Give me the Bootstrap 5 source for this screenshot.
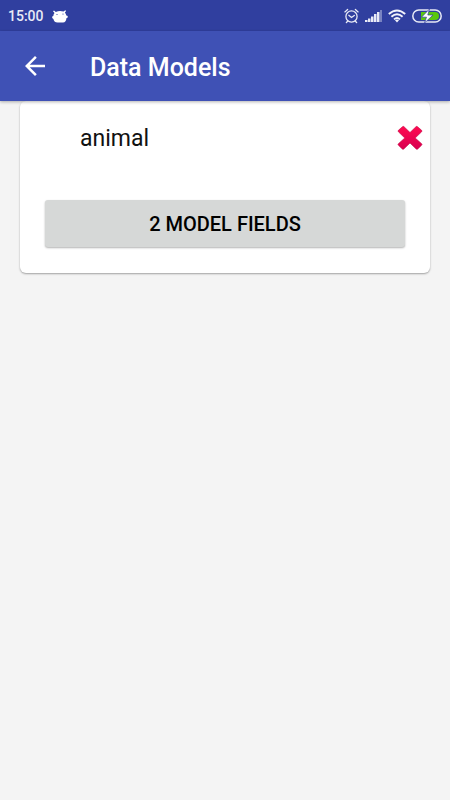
<!DOCTYPE html>
<html lang="en">
<head>
<meta charset="utf-8">
<meta name="viewport" content="width=device-width, initial-scale=1">
<title>Data Models</title>
<link href="https://cdn.jsdelivr.net/npm/bootstrap@5.3.0/dist/css/bootstrap.min.css" rel="stylesheet">
<style>
body { background: #f4f4f4; font-family: Roboto, "Liberation Sans", sans-serif; color: #111; }
svg { display: block; flex: none; }
.status-bar { background: #303f9f; height: 31px; padding: 1px 8px 0; color: #e8eaf6; font-size: 14px; font-weight: 500; }
.status-icons { gap: 6px; }
.app-bar { background: #3f51b5; height: 70px; padding: 0 20px; box-shadow: 0 1px 3px rgba(0,0,0,.3); position: relative; z-index: 1; }
.app-title { color: #fff; font-size: 25px; line-height: 32px; font-weight: 500; margin-left: 40px; padding-top: 3px; }
.model-card { border-radius: 6px; box-shadow: 0 1px 2px rgba(0,0,0,.35); padding-bottom: 26px; }
.model-head { padding: 19px 7px 0 60px; }
.model-name { font-size: 23px; line-height: 34px; font-weight: 400; padding-top: 2px; }
.fields-btn, .fields-btn:hover { background: #d6d8d7; color: #000; font-size: 20px; line-height: 26px; font-weight: 500; border: 0; border-radius: 3px; padding: 11px 10px 10px; box-shadow: 0 1px 2px rgba(0,0,0,.3); }
.fields-row { padding: 44px 25px 0; }
</style>
<script src="https://cdn.jsdelivr.net/npm/bootstrap@5.3.0/dist/js/bootstrap.bundle.min.js"></script>
</head>
<body class="min-vh-100">
<div class="status-bar d-flex align-items-center justify-content-between">
  <div class="d-flex align-items-center gap-2">
    <span>15:00</span>
    <svg width="16" height="13" viewBox="0 0 16 13" aria-hidden="true"><path fill="#fff" d="M1 1.300 2 .6 3.800 2Q7.500.2 11.500 1.600L13.300.3l.8.6-1.200 1.600Q14 3.800 14.300 5.500l1.400.4v1.600l-1.300.8Q14.200 12.300 11 12.600H5.500Q2.200 12.600 1.400 9L.2 8V6.500L1.300 6Q1.500 4 2.500 3z"/><circle cx="5" cy="4.500" r=".6" fill="#303f9f"/><circle cx="11" cy="4" r=".6" fill="#303f9f"/></svg>
  </div>
  <div class="status-icons d-flex align-items-center">
    <svg width="15" height="16" viewBox="0 0 15 16" fill="none" stroke="#e8eaf6" stroke-width="1.300" stroke-linecap="round" aria-hidden="true"><circle cx="7.500" cy="8.500" r="5.600"/><path d="M.9 3.900 3.600 1.500M14.100 3.900 11.400 1.500M4.800 7.300 7.500 9.500l2.800-2M3.600 13.300l-1.200 1.200M11.400 13.300l1.200 1.200"/></svg>
    <svg width="17" height="14" viewBox="0 0 17 14" fill="#e8eaf6" aria-hidden="true"><path d="M0 11h2.500v2H0zM3 9.500h2.500V13H3zM6 7.500h2.500V13H6zM9 5h2.500v8H9zM12 3h2.500v10H12z"/><path opacity=".4" d="M15 1h2v12h-2z"/></svg>
    <svg width="18" height="14" viewBox="0 0 18 14" fill="none" stroke="#f2f3fb" stroke-width="1.900" aria-hidden="true"><path d="M.8 5Q9-2.200 17.200 5M3.400 7.800Q9 2.800 14.600 7.800M6 10.400Q9 7.800 12 10.400"/><path fill="#f2f3fb" stroke="none" d="M7 11.300Q9 9.800 11 11.300L9 13.500z"/></svg>
    <svg width="30" height="16" viewBox="0 0 30 16" aria-hidden="true"><rect x=".8" y="2" width="28.400" height="12" rx="6" fill="#303f9f" stroke="#e8eaf6" stroke-width="1.500"/><path fill="#5ac80f" d="M9 4h14a4 4 0 0 1 0 8H9z"/><path fill="#fff" stroke="#303f9f" stroke-width=".7" d="M17.500 1 9.500 9.200h5L12.500 15 21 7h-5.200z"/></svg>
  </div>
</div>
<header class="app-bar d-flex align-items-center">
  <button type="button" class="btn p-0 border-0" aria-label="Back">
    <svg width="30" height="30" viewBox="0 0 24 24" fill="#fff"><path d="M20 11H7.830l5.590-5.590L12 4l-8 8 8 8 1.410-1.410L7.830 13H20v-2z"/></svg>
  </button>
  <h1 class="app-title mb-0">Data Models</h1>
</header>
<main class="px-3 mx-1">
  <section class="model-card bg-white">
    <div class="model-head d-flex align-items-center justify-content-between">
      <h2 class="model-name mb-0">animal</h2>
      <button type="button" class="btn p-0 border-0" aria-label="Delete animal">
        <svg width="26" height="26" viewBox="0 0 26 26"><defs><linearGradient id="red" x2="0" y2="1"><stop stop-color="#ff0a50"/><stop offset="1" stop-color="#d80050"/></linearGradient></defs><path fill="url(#red)" stroke="#c5003f" stroke-width=".6" stroke-linejoin="round" d="M5.500 1.700Q6.200 1 7 1.700L13 7.500l6-5.800Q19.800 1 20.500 1.700L24.600 5.300Q25.400 6 24.600 6.800L18.200 13l6.400 5.700Q25.400 19.500 24.600 20.200L20.700 24Q20 24.700 19.200 24L13 18l-6.200 6Q6 24.700 5.300 24L1.400 20.200Q.6 19.500 1.400 18.700L7.800 13 1.400 6.800Q.6 6 1.400 5.300z"/></svg>
      </button>
    </div>
    <div class="fields-row">
      <button type="button" class="btn fields-btn w-100">2 MODEL FIELDS</button>
    </div>
  </section>
</main>
</body>
</html>
